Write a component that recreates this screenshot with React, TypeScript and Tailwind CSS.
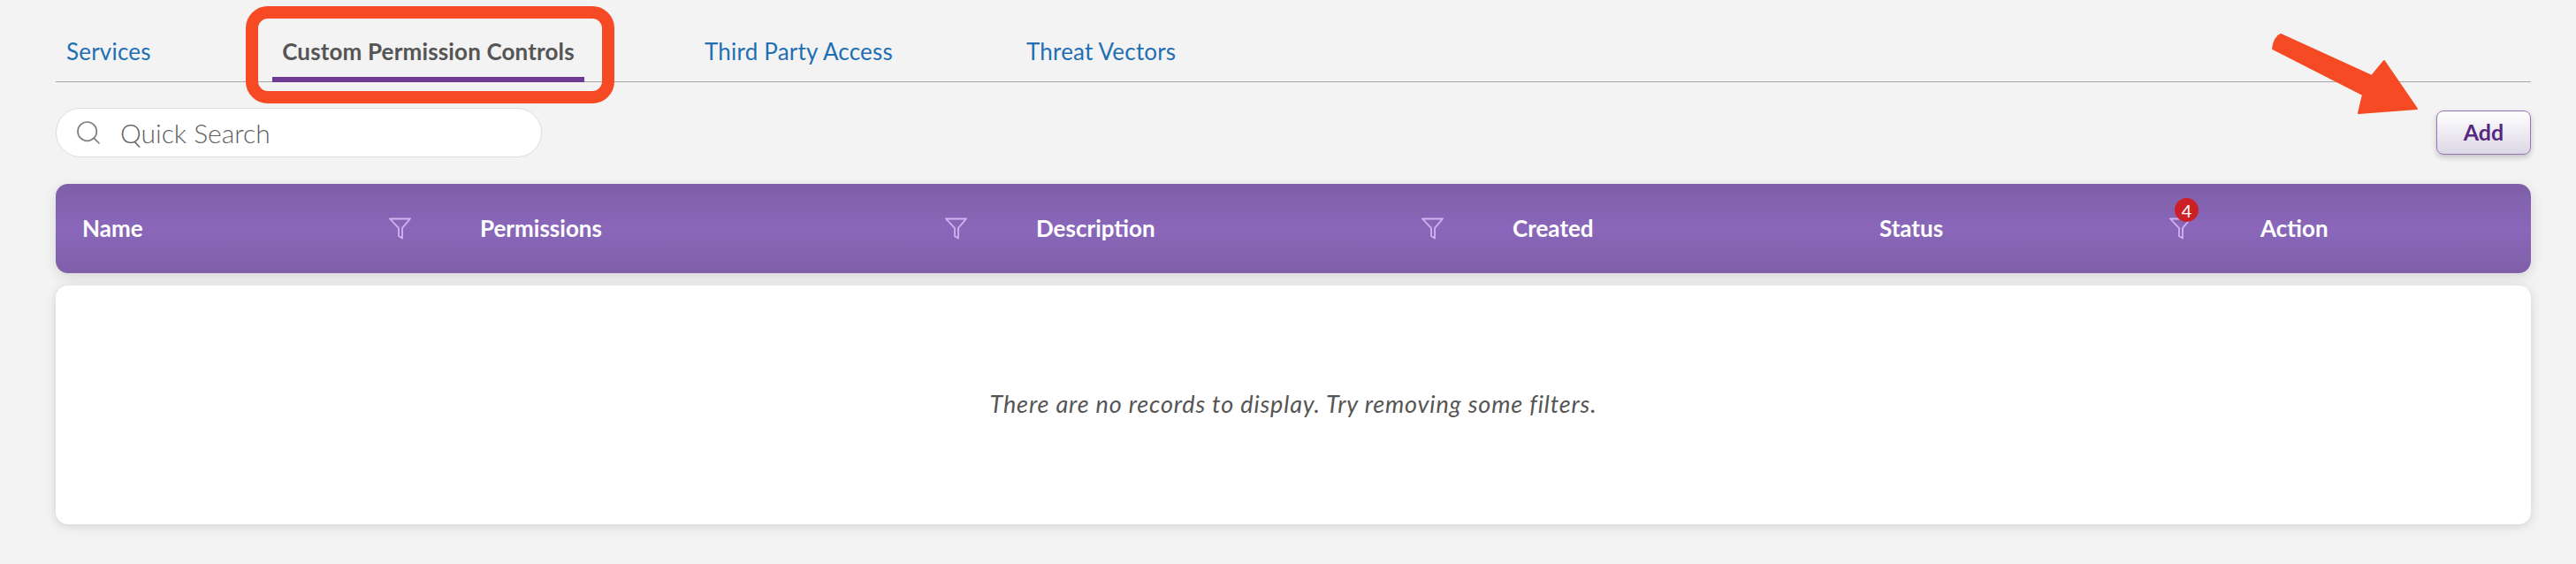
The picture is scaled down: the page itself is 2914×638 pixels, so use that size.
import React from 'react';
import { Search } from 'lucide-react';

const tabs = [
  { label: 'Services', width: 'w-[245px]', pl: 'pl-[12px]' },
  { label: 'Custom Permission Controls', width: 'w-[489px]', active: true },
  { label: 'Third Party Access', width: 'w-[364px]' },
  { label: 'Threat Vectors', width: 'w-[300px]' },
];

const columns = [
  { label: 'Name', width: 'w-[450px]', filter: true },
  { label: 'Permissions', width: 'w-[629px]', filter: true },
  { label: 'Description', width: 'w-[539px]', filter: true },
  { label: 'Created', width: 'w-[415px]' },
  { label: 'Status', width: 'w-[431px]', filter: true, count: 4 },
  { label: 'Action', width: 'flex-1' },
];

function FilterIcon() {
  return (
    <svg className="w-[25px] h-[25px] shrink-0" viewBox="0 0 25 25" fill="none" stroke="#cfb6f0" strokeWidth={1.8} strokeLinejoin="round">
      <path d="M1 1.5h23L15 12v11.5l-4-2.5v-9z" />
    </svg>
  );
}

export default function App() {
  return (
    <div className="relative h-[638px] overflow-hidden bg-[#f3f3f3] pl-[63px] pr-[51px] pt-[20px] font-['Lato',sans-serif]">
      <div className="flex h-[73px] border-b border-[#a6a6a6]">
        {tabs.map((t) => (
          <div key={t.label} className={`${t.width} ${t.pl ?? ''} flex items-center`}>
            {t.active ? (
              <div className="mt-[7px] flex h-[66px] w-[353px] items-center justify-center border-b-[6px] border-[#6f3a96] pt-[4px] text-[26px] font-bold tracking-[0.15px] text-[#555555]">
                {t.label}
              </div>
            ) : (
              <span className="pt-[5px] text-[26px] tracking-[0.2px] text-[#1f6fb2]">{t.label}</span>
            )}
          </div>
        ))}
      </div>

      <div className="mt-[29px] flex items-center justify-between">
        <div className="flex h-[56px] w-[550px] items-center rounded-[28px] border border-[#dcdcdc] bg-white pl-[20px]">
          <Search className="h-[32px] w-[32px] text-[#808080]" strokeWidth={1.3} />
          <span className="ml-[20px] text-[30px] font-light text-[#5f5f5f]">Quick Search</span>
        </div>
        <button className="h-[50px] w-[107px] rounded-[8px] border border-[#9a72b8] bg-gradient-to-b from-white to-[#dcd7e5] text-[25px] font-bold text-[#56287f] shadow-[0_3px_6px_rgba(0,0,0,0.2)]">
          Add
        </button>
      </div>

      <div className="mt-[30px] flex h-[101px] items-center rounded-[14px] bg-[linear-gradient(to_bottom,#7f5fa8,#8a67ba_50%,#7f5fa8)] pl-[30px] shadow-[0_4px_14px_rgba(0,0,0,0.12)]">
        {columns.map((c) => (
          <div key={c.label} className={`${c.width} flex items-center justify-between pr-[78px]`}>
            <span className="text-[26px] font-bold text-white">{c.label}</span>
            {c.filter && (
              <div className="relative">
                <FilterIcon />
                {c.count && (
                  <span className="absolute left-[6px] top-[-22px] flex h-[27px] w-[27px] items-center justify-center rounded-full bg-[#cc2027] text-[20px] text-white">
                    {c.count}
                  </span>
                )}
              </div>
            )}
          </div>
        ))}
      </div>

      <div className="mt-[14px] flex h-[270px] items-center justify-center rounded-[14px] bg-white pb-[2px] shadow-[0_2px_12px_rgba(0,0,0,0.14)]">
        <p className="text-[27px] italic tracking-[0.85px] text-[#555555]">There are no records to display. Try removing some filters.</p>
      </div>

      {/* hand-drawn annotations on top of the screenshot */}
      <svg className="absolute left-0 top-0 pointer-events-none" width="2914" height="638" fill="none">
        <rect x="285" y="14" width="403" height="96" rx="18" stroke="#f54a24" strokeWidth="14" />
        <path
          d="M2580 39 L2683 86 L2697 69 L2734 123 L2668 128 L2673 107 L2571 55 Q2573 42 2580 39Z"
          fill="#f54a24"
          stroke="#f54a24"
          strokeWidth="2"
          strokeLinejoin="round"
        />
      </svg>
    </div>
  );
}
